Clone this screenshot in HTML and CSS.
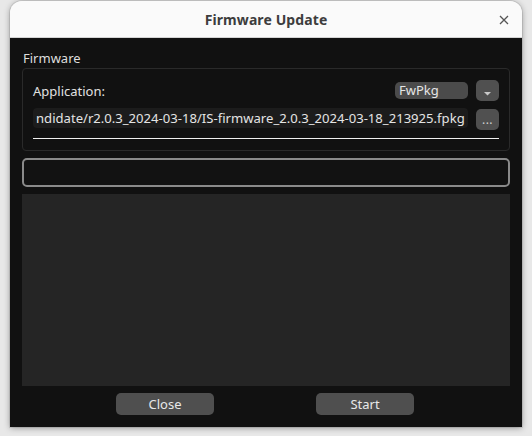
FILE: index.html
```html
<!DOCTYPE html>
<html>
<head>
<meta charset="utf-8">
<link rel="stylesheet" href="styles.css">
</head>
<body>
<div class="window">
  <div class="titlebar">
    <span></span>
    <span class="title">Firmware Update</span>
    <span class="close">
      <svg width="10" height="10" viewBox="0 0 10 10"><path d="M1 1L9 9M9 1L1 9" stroke="#555" stroke-width="1.3" fill="none"/></svg>
    </span>
  </div>
  <div class="content">
    <div class="section-label">Firmware</div>
    <div class="group">
      <div class="row row-app">
        <span class="label">Application:</span>
        <span class="combo">FwPkg</span>
        <span class="tool-btn arrow-btn">
          <svg width="7" height="4" viewBox="0 0 7 4"><path d="M0 0H7L3.5 3.5Z" fill="#c8c8c8"/></svg>
        </span>
      </div>
      <div class="row row-path">
        <span class="path">ndidate/r2.0.3_2024-03-18/IS-firmware_2.0.3_2024-03-18_213925.fpkg</span>
        <span class="tool-btn dots-btn">...</span>
      </div>
      <div class="underline"></div>
    </div>
    <div class="progress"></div>
    <div class="log"></div>
    <div class="actions">
      <span class="btn">Close</span>
      <span class="btn">Start</span>
    </div>
  </div>
</div>
</body>
</html>
```
FILE: styles.css
```css
html, body {
  margin: 0;
  padding: 0;
}
body {
  background: #e8e8e8;
  width: 532px;
  height: 436px;
  overflow: hidden;
  font-family: "Noto Sans", "DejaVu Sans", sans-serif;
}
.window {
  margin: 1px 0 0 10px;
  width: 512px;
  height: 426px;
  border-radius: 12px 12px 0 0;
  overflow: hidden;
  box-shadow: 0 1px 6px rgba(0,0,0,0.35), 0 0 0 1px rgba(0,0,0,0.08);
  display: flex;
  flex-direction: column;
}
.titlebar {
  height: 36px;
  background: #fafafa;
  border-bottom: 1px solid #d4d4d4;
  display: grid;
  grid-template-columns: 1fr auto 1fr;
  align-items: center;
}
.title {
  font-weight: bold;
  font-size: 14px;
  color: #3d3d3d;
  letter-spacing: 0.1px;
}
.close {
  justify-self: end;
  margin-right: 13px;
  display: flex;
  margin-top: 1px;
}
.content {
  flex: 1;
  background: #111111;
  padding: 0 12px 12px;
  display: flex;
  flex-direction: column;
}
.section-label {
  padding-top: 12px;
  line-height: 16px;
  font-size: 13px;
  color: #dedede;
  margin-left: 1px;
  margin-bottom: 2px;
}
.group {
  border: 1px solid #2a2a2a;
  border-radius: 4px;
  padding: 11px 10px 11px;
}
.row {
  display: flex;
  align-items: center;
}
.row-app {
  height: 21px;
}
.label {
  flex: 1;
  font-size: 13px;
  color: #e2e2e2;
  padding-top: 1px;
}
.combo {
  width: 69px;
  height: 17px;
  line-height: 17px;
  padding-left: 4px;
  background: #4b4b4b;
  border-radius: 5px;
  font-size: 13px;
  color: #e6e6e6;
  margin-right: 8px;
}
.tool-btn {
  width: 23px;
  height: 21px;
  background: #505050;
  border-radius: 5px;
  display: flex;
  justify-content: center;
  box-sizing: border-box;
  color: #d0d0d0;
}
.arrow-btn {
  align-items: flex-end;
  padding-bottom: 5px;
}
.row-path {
  margin-top: 7px;
  height: 22px;
  align-items: flex-start;
}
.path {
  flex: 1;
  height: 20px;
  line-height: 20px;
  background: #1c1c1c;
  border-radius: 4px;
  padding-left: 3px;
  font-size: 13.1px;
  color: #e4e4e4;
  white-space: nowrap;
  overflow: hidden;
  margin-right: 8px;
}
.dots-btn {
  margin-top: 1px;
  font-size: 12px;
  line-height: 21px;
  align-items: flex-end;
  letter-spacing: 0.5px;
}
.underline {
  margin-top: 8px;
  height: 1px;
  background: #f0f0f0;
}
.progress {
  margin-top: 7px;
  height: 29px;
  box-sizing: border-box;
  border: 2px solid #8a8a8a;
  border-radius: 5px;
  background: #121212;
}
.log {
  margin-top: 7px;
  flex: 1;
  background: #252525;
}
.actions {
  margin-top: 7px;
  display: flex;
  justify-content: center;
  gap: 102px;
  padding-right: 2px;
}
.btn {
  width: 98px;
  height: 22px;
  line-height: 22px;
  text-align: center;
  background: #4f4f4f;
  border-radius: 5px;
  font-size: 13px;
  color: #e8e8e8;
}
```
